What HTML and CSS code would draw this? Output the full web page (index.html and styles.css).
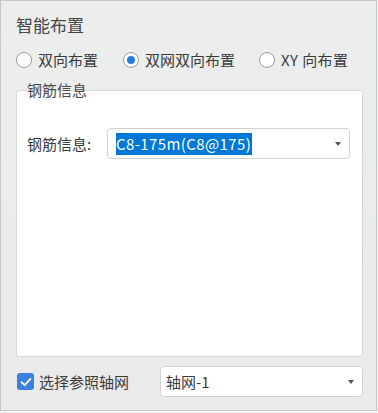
FILE: index.html
```html
<!DOCTYPE html>
<html lang="zh-CN">
<head>
    <meta charset="UTF-8">
    <title>智能布置</title>
    <link rel="stylesheet" href="styles.css">
</head>
<body>
    <div class="panel">
        <div class="title">智能布置</div>

        <div class="radios">
            <label class="radio"><span class="dot"></span>双向布置</label>
            <label class="radio checked"><span class="dot"></span>双网双向布置</label>
            <label class="radio"><span class="dot"></span>XY 向布置</label>
        </div>

        <div class="group">
            <span class="group-title">钢筋信息</span>
            <div class="field">
                <span class="field-label">钢筋信息:</span>
                <div class="combo wide">
                    <span class="selected">C8-175m(C8@175)</span>
                    <span class="arrow"></span>
                </div>
            </div>
        </div>

        <div class="bottom">
            <label class="check">
                <span class="box">
                    <svg width="12" height="10" viewBox="0 0 12 10"><path d="M1.5 5.2 L4.6 8.2 L10.5 1.8" fill="none" stroke="#fff" stroke-width="1.8" stroke-linecap="round" stroke-linejoin="round"/></svg>
                </span>
                选择参照轴网
            </label>
            <div class="combo axis">
                <span class="value">轴网-1</span>
                <span class="arrow"></span>
            </div>
        </div>
    </div>
</body>
</html>
```

FILE: styles.css
```css
* {
    margin: 0;
    padding: 0;
    box-sizing: border-box;
}

body {
    width: 378px;
    height: 413px;
    background: #f4f4f4;
    font-family: "Noto Sans CJK SC", "Noto Sans", sans-serif;
    color: #3a3a3a;
}

.panel {
    width: 377px;
    height: 411px;
    border: 1px solid #c6c6c6;
    background: linear-gradient(180deg, #eceeed 0%, #ebecec 40%, #eaeaea 100%);
    padding: 13px 13px 0 15px;
    display: flex;
    flex-direction: column;
}

.title {
    font-size: 17px;
    line-height: 22px;
    color: #454545;
}

.radios {
    display: flex;
    align-items: center;
    height: 20px;
    margin-top: 14px;
}

.radio {
    display: flex;
    align-items: center;
    flex-shrink: 0;
    white-space: nowrap;
    gap: 6px;
    font-size: 15px;
    line-height: 20px;
    margin-right: 25px;
}

.radio:nth-child(2) {
    margin-right: 24px;
}

.radio:nth-child(3) {
    letter-spacing: 0.4px;
}

.dot {
    flex-shrink: 0;
    width: 16px;
    height: 16px;
    border-radius: 50%;
    border: 1px solid #9a9a9a;
    background: #fff;
    display: flex;
    align-items: center;
    justify-content: center;
}

.radio.checked .dot::after {
    content: "";
    width: 8px;
    height: 8px;
    border-radius: 50%;
    background: #2a7ae2;
}

.group {
    position: relative;
    margin-top: 20px;
    height: 267px;
    background: #fff;
    border: 1px solid #d6d6d6;
    border-radius: 3px;
    padding: 37px 12px 0 10px;
}

.group-title {
    position: absolute;
    left: 10px;
    top: -11px;
    font-size: 15px;
    line-height: 20px;
    color: #4a4a4a;
}

.field {
    display: flex;
    align-items: center;
}

.field-label {
    width: 80px;
    font-size: 15px;
}

.combo {
    display: flex;
    align-items: center;
    justify-content: space-between;
    height: 31px;
    background: #fff;
    border: 1px solid #d2d2d2;
    border-radius: 4px;
    padding: 0 8px 0 7px;
    font-size: 15px;
}

.combo.wide {
    width: 243px;
    padding-left: 8px;
}

.selected {
    background: #0078d7;
    color: #fff;
    line-height: 22px;
    letter-spacing: 0.4px;
    padding-right: 1px;
}

.arrow {
    width: 0;
    height: 0;
    border-left: 3.5px solid transparent;
    border-right: 3.5px solid transparent;
    border-top: 4px solid #555;
}

.bottom {
    display: flex;
    align-items: center;
    margin-top: 9px;
    height: 31px;
}

.check {
    display: flex;
    align-items: center;
    gap: 5px;
    width: 144px;
    font-size: 15px;
    padding-left: 1px;
}

.box {
    width: 17px;
    height: 17px;
    border-radius: 3px;
    background: #3a80de;
    display: flex;
    align-items: center;
    justify-content: center;
}

.combo.axis {
    width: 203px;
    padding-left: 5px;
}

.value {
    color: #3a3a3a;
}
```
